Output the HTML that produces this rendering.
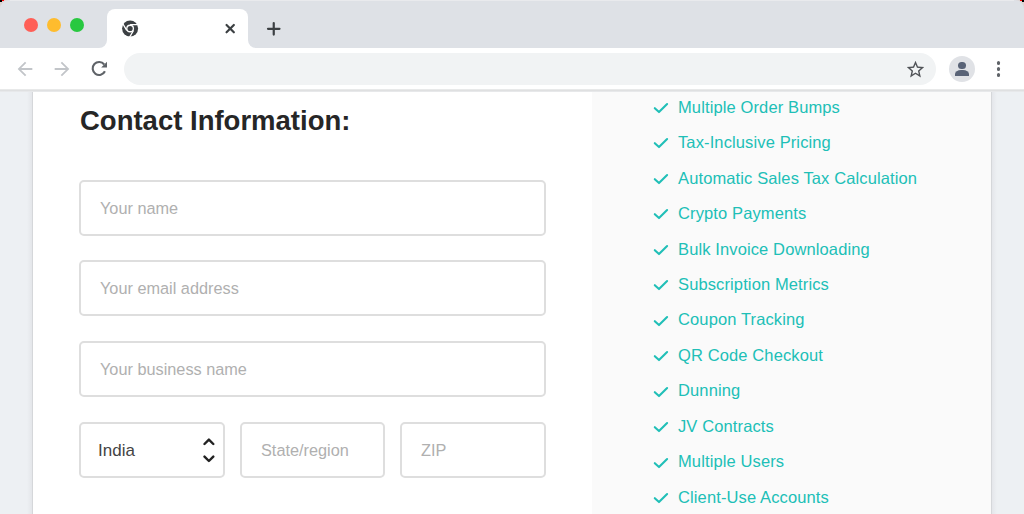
<!DOCTYPE html>
<html><head><meta charset="utf-8">
<style>
html,body{margin:0;padding:0;}
body{width:1024px;height:514px;overflow:hidden;position:relative;background:#dcd2d1;font-family:"Liberation Sans",sans-serif;}
.win{position:absolute;left:0;top:0;width:1024px;height:514px;background:#dee1e6;border-radius:9px 9px 0 0;overflow:hidden;}
.abs{position:absolute;}
.dot{position:absolute;width:14px;height:14px;border-radius:50%;top:17.6px;}
.tab{position:absolute;left:107px;top:9px;width:141px;height:40px;background:#fff;border-radius:8px 8px 0 0;}
.flare{position:absolute;top:40px;width:8px;height:8px;background:#fff;}
.fl{position:absolute;left:0;top:0;width:8px;height:8px;background:#dee1e6;}
.toolbar{position:absolute;left:0;top:48px;width:1024px;height:42px;background:#fff;}
.omni{position:absolute;left:124px;top:53px;width:812px;height:32px;border-radius:16px;background:#f1f3f4;}
.hr{position:absolute;left:0;top:89px;width:1024px;height:3px;background:linear-gradient(#f0f1f1,#dfe0e1 35%,#dfe0e1 65%,#eef0f2);}
.page{position:absolute;left:0;top:91px;width:1024px;height:424px;background:linear-gradient(to right,#edf0f3 0,#edf0f3 27px,#e4e6ea 32px,#e4e6ea 992px,#edf0f3 997px);}
.card{position:absolute;left:33px;top:0;width:958px;height:424px;background:#fff;}
.side{position:absolute;left:559px;top:0;width:399px;height:424px;background:#fafafa;}
.vl{position:absolute;top:0;width:1px;height:424px;background:#d5d7da;}
h1{position:absolute;margin:0;left:80px;top:104.8px;font-size:27.5px;font-weight:bold;color:#262626;white-space:nowrap;}
.inp{position:absolute;box-sizing:border-box;border:2px solid #dedede;border-radius:5px;background:#fff;height:56px;}
.ph{position:absolute;left:19px;top:16px;font-size:16.3px;line-height:20px;color:#b0b0b0;white-space:nowrap;}
.india{left:17px;top:17px;font-size:17px;color:#444;}
.feat{position:absolute;left:653px;white-space:nowrap;}
.feat svg{position:absolute;left:0;top:4px;}
.feat span{position:absolute;left:25px;top:0.8px;font-size:16.5px;letter-spacing:0.12px;color:#20bfb7;}
</style></head><body>
<div class="abs" style="left:0;top:0;width:2px;height:2px;background:#000;"></div><div class="abs" style="left:2px;top:0;width:2px;height:1px;background:#f00;"></div>
<div class="abs" style="left:1022px;top:0;width:2px;height:2px;background:#000;"></div><div class="abs" style="left:1020px;top:0;width:2px;height:1px;background:#f00;"></div>
<div class="win">
  <div class="dot" style="left:24px;background:#ff5f57;"></div>
  <div class="dot" style="left:47px;background:#febc2e;"></div>
  <div class="dot" style="left:70px;background:#28c840;"></div>
  <div class="tab"></div>
  <div class="flare" style="left:99px;"><div class="fl" style="border-bottom-right-radius:8px;"></div></div>
  <div class="flare" style="left:248px;"><div class="fl" style="border-bottom-left-radius:8px;"></div></div>
  <svg class="abs" style="left:120px;top:18px" width="21" height="21" viewBox="0 0 21 21">
    <circle cx="10.1" cy="10.5" r="8" fill="#3c4043"/>
    <circle cx="10.1" cy="10.5" r="3.9" fill="#fff"/>
    <circle cx="10.1" cy="10.5" r="2.6" fill="#3c4043"/>
    <path d="M10.1 6.6H19M13.48 12.45L8.9 20.4M6.72 12.45L2.1 4.5" stroke="#fff" stroke-width="1.3"/>
  </svg>
  <svg class="abs" style="left:220px;top:19px" width="20" height="20" viewBox="0 0 20 20">
    <path d="M6.55 6L13.85 13.3M13.85 6L6.55 13.3" stroke="#3c4043" stroke-width="2.2" stroke-linecap="round"/>
  </svg>
  <svg class="abs" style="left:264px;top:19px" width="20" height="20" viewBox="0 0 20 20">
    <path d="M9.75 4.1V15.6M4 9.85H15.5" stroke="#3c4043" stroke-width="2.2" stroke-linecap="round"/>
  </svg>
  <div class="toolbar"></div>
  <div class="omni"></div>
  <svg class="abs" style="left:14px;top:57.6px" width="22" height="22" viewBox="0 0 24 24"><path fill="#c2c5c9" d="M20 11H7.83l5.59-5.59L12 4l-8 8 8 8 1.41-1.41L7.83 13H20v-2z"/></svg>
  <svg class="abs" style="left:51px;top:57.6px" width="22" height="22" viewBox="0 0 24 24"><path fill="#c2c5c9" d="M12 4l-1.41 1.41L16.17 11H4v2h12.17l-5.58 5.59L12 20l8-8z"/></svg>
  <svg class="abs" style="left:80px;top:50px" width="40" height="40" viewBox="80 50 40 40"><path d="M104.94 71.23A6.45 6.45 0 1 1 104.2 64.5" fill="none" stroke="#5f6368" stroke-width="2.1"/><path d="M101.2 67.6H107V61.8Z" fill="#5f6368"/></svg>
  <svg class="abs" style="left:905.2px;top:58.9px" width="21" height="21" viewBox="0 0 24 24"><path fill="#505357" d="M22 9.24l-7.19-.62L12 2 9.19 8.63 2 9.24l5.46 4.73L5.820 21 12 17.27 18.18 21l-1.63-7.03L22 9.24zM12 15.4l-3.76 2.27 1-4.28-3.32-2.88 4.38-.38L12 6.1l1.71 4.04 4.38.38-3.32 2.88 1 4.28L12 15.4z"/></svg>
  <div class="abs" style="left:949px;top:56px;width:26px;height:26px;border-radius:50%;background:#e0e2e6;"></div>
  <div class="abs" style="left:958px;top:61.8px;width:7.6px;height:7.6px;border-radius:50%;background:#596377;"></div>
  <div class="abs" style="left:954.8px;top:69.6px;width:14px;height:6.2px;border-radius:6px 6px 0 0 / 4px 4px 0 0;background:#596377;"></div>
  <div class="abs" style="left:996.7px;top:61px;width:3.8px;height:3.8px;border-radius:50%;background:#5f6368;"></div>
  <div class="abs" style="left:996.7px;top:67px;width:3.8px;height:3.8px;border-radius:50%;background:#5f6368;"></div>
  <div class="abs" style="left:996.7px;top:73px;width:3.8px;height:3.8px;border-radius:50%;background:#5f6368;"></div>
<div class="page">
    <div class="card">
      <div class="side"></div>
    </div>
    <div class="vl" style="left:32px"></div>
    <div class="vl" style="left:991px"></div>
  </div>
  <div class="hr"></div>
  <div class="abs" style="left:10px;top:0;width:1004px;height:1px;background:#e9eaed;"></div>
  <h1>Contact Information:</h1>
  <div class="inp" style="left:79px;top:180px;width:467px;"><span class="ph">Your name</span></div>
  <div class="inp" style="left:79px;top:260px;width:467px;"><span class="ph">Your email address</span></div>
  <div class="inp" style="left:79px;top:341px;width:467px;"><span class="ph">Your business name</span></div>
  <div class="inp" style="left:79px;top:422px;width:146px;"><span class="ph india">India</span>
    <svg class="abs" style="left:122px;top:14px" width="14" height="28" viewBox="0 0 14 28"><path d="M1.5 6L5.9 1.6L10.3 6M1.5 18.6L5.9 23L10.3 18.6" fill="none" stroke="#222" stroke-width="2.4" stroke-linecap="round" stroke-linejoin="round"/></svg></div>
  <div class="inp" style="left:240px;top:422px;width:145px;"><span class="ph">State/region</span></div>
  <div class="inp" style="left:400px;top:422px;width:146px;"><span class="ph">ZIP</span></div>
  <div class="feat" style="top:97.00px"><svg width="16" height="14" viewBox="0 0 16 14"><path d="M1.8 7.2L6 11.1L14.1 3" fill="none" stroke="#20bfb7" stroke-width="2.1" stroke-linecap="round" stroke-linejoin="round"/></svg><span>Multiple Order Bumps</span></div>
  <div class="feat" style="top:132.45px"><svg width="16" height="14" viewBox="0 0 16 14"><path d="M1.8 7.2L6 11.1L14.1 3" fill="none" stroke="#20bfb7" stroke-width="2.1" stroke-linecap="round" stroke-linejoin="round"/></svg><span>Tax-Inclusive Pricing</span></div>
  <div class="feat" style="top:167.90px"><svg width="16" height="14" viewBox="0 0 16 14"><path d="M1.8 7.2L6 11.1L14.1 3" fill="none" stroke="#20bfb7" stroke-width="2.1" stroke-linecap="round" stroke-linejoin="round"/></svg><span>Automatic Sales Tax Calculation</span></div>
  <div class="feat" style="top:203.35px"><svg width="16" height="14" viewBox="0 0 16 14"><path d="M1.8 7.2L6 11.1L14.1 3" fill="none" stroke="#20bfb7" stroke-width="2.1" stroke-linecap="round" stroke-linejoin="round"/></svg><span>Crypto Payments</span></div>
  <div class="feat" style="top:238.80px"><svg width="16" height="14" viewBox="0 0 16 14"><path d="M1.8 7.2L6 11.1L14.1 3" fill="none" stroke="#20bfb7" stroke-width="2.1" stroke-linecap="round" stroke-linejoin="round"/></svg><span>Bulk Invoice Downloading</span></div>
  <div class="feat" style="top:274.25px"><svg width="16" height="14" viewBox="0 0 16 14"><path d="M1.8 7.2L6 11.1L14.1 3" fill="none" stroke="#20bfb7" stroke-width="2.1" stroke-linecap="round" stroke-linejoin="round"/></svg><span>Subscription Metrics</span></div>
  <div class="feat" style="top:309.70px"><svg width="16" height="14" viewBox="0 0 16 14"><path d="M1.8 7.2L6 11.1L14.1 3" fill="none" stroke="#20bfb7" stroke-width="2.1" stroke-linecap="round" stroke-linejoin="round"/></svg><span>Coupon Tracking</span></div>
  <div class="feat" style="top:345.15px"><svg width="16" height="14" viewBox="0 0 16 14"><path d="M1.8 7.2L6 11.1L14.1 3" fill="none" stroke="#20bfb7" stroke-width="2.1" stroke-linecap="round" stroke-linejoin="round"/></svg><span>QR Code Checkout</span></div>
  <div class="feat" style="top:380.60px"><svg width="16" height="14" viewBox="0 0 16 14"><path d="M1.8 7.2L6 11.1L14.1 3" fill="none" stroke="#20bfb7" stroke-width="2.1" stroke-linecap="round" stroke-linejoin="round"/></svg><span>Dunning</span></div>
  <div class="feat" style="top:416.05px"><svg width="16" height="14" viewBox="0 0 16 14"><path d="M1.8 7.2L6 11.1L14.1 3" fill="none" stroke="#20bfb7" stroke-width="2.1" stroke-linecap="round" stroke-linejoin="round"/></svg><span>JV Contracts</span></div>
  <div class="feat" style="top:451.50px"><svg width="16" height="14" viewBox="0 0 16 14"><path d="M1.8 7.2L6 11.1L14.1 3" fill="none" stroke="#20bfb7" stroke-width="2.1" stroke-linecap="round" stroke-linejoin="round"/></svg><span>Multiple Users</span></div>
  <div class="feat" style="top:486.95px"><svg width="16" height="14" viewBox="0 0 16 14"><path d="M1.8 7.2L6 11.1L14.1 3" fill="none" stroke="#20bfb7" stroke-width="2.1" stroke-linecap="round" stroke-linejoin="round"/></svg><span>Client-Use Accounts</span></div>
</div>
</body></html>
